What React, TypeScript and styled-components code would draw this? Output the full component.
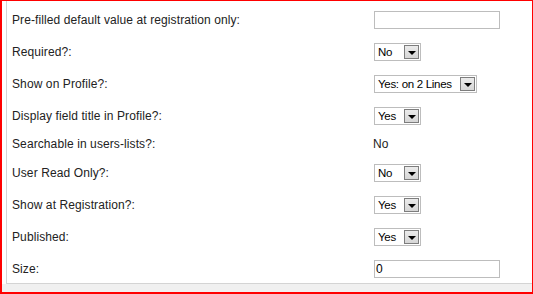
import React from "react";
import styled, { createGlobalStyle } from "styled-components";

const Global = createGlobalStyle`
  html, body { margin: 0; padding: 0; background: #ffffff; }
  body { font-family: "Liberation Sans", Arial, sans-serif; }
  * { box-sizing: border-box; }
`;

const Frame = styled.div`
  width: 533px;
  height: 294px;
  border-style: solid;
  border-color: #ff0000;
  border-width: 1px 1px 2px 2px;
  background: #f0f0f0;
  display: flex;
  flex-direction: column;
`;

const Sheet = styled.div`
  background: #ffffff;
  padding-left: 4px;
`;

const Panel = styled.div`
  border-left: 1px solid #d4d4d4;
  border-bottom: 1px solid #d4d4d4;
  height: 283px;
  padding: 3px 0 0 5px;
  display: grid;
  grid-template-columns: 361px 1fr;
  align-content: start;
`;

const Row = styled.div<{ $text?: boolean; $last?: boolean }>`
  display: contents;
  & > div {
    padding: ${(p) => (p.$text ? "5px 0" : p.$last ? "7px 0 5px" : "7px 0")};
    line-height: ${(p) => (p.$text ? "15px" : "18px")};
    height: ${(p) => (p.$text ? "25px" : p.$last ? "30px" : "32px")};
  }
`;

const Label = styled.div`
  font-size: 12px;
  color: #222222;
  white-space: nowrap;
  letter-spacing: 0.1px;
`;

const Value = styled.div`
  font-size: 12px;
  color: #222222;
  display: flex;
  align-items: flex-start;
`;

const TextBox = styled.div`
  width: 126px;
  height: 18px;
  margin-left: 1px;
  border: 1px solid #bdbdbd;
  background: #ffffff;
  font-size: 12px;
  line-height: 16px;
  padding-left: 1px;
  color: #000000;
`;

const Select = styled.div<{ $w: number }>`
  width: ${(p) => p.$w}px;
  height: 18px;
  margin-left: 1px;
  border: 1px solid #bdbdbd;
  background: #ffffff;
  display: flex;
  align-items: center;
  justify-content: space-between;
  padding: 0 1px 0 3px;
`;

const SelectText = styled.span`
  font-size: 11.5px;
  line-height: 16px;
  color: #000000;
  white-space: nowrap;
  letter-spacing: -0.3px;
`;

const Arrow = styled.span`
  width: 15px;
  height: 14px;
  border: 1px solid #7d7d7d;
  background: linear-gradient(#ebebeb, #d6d6d6);
  display: flex;
  align-items: center;
  justify-content: center;
  &::after {
    content: "";
    margin-top: 2px;
    border-left: 4px solid transparent;
    border-right: 4px solid transparent;
    border-top: 4px solid #000000;
  }
`;

type Field =
  | { label: string; kind: "input"; value: string }
  | { label: string; kind: "select"; value: string; width: number }
  | { label: string; kind: "text"; value: string };

const fields: Field[] = [
  { label: "Pre-filled default value at registration only:", kind: "input", value: "" },
  { label: "Required?:", kind: "select", value: "No", width: 47 },
  { label: "Show on Profile?:", kind: "select", value: "Yes: on 2 Lines", width: 103 },
  { label: "Display field title in Profile?:", kind: "select", value: "Yes", width: 47 },
  { label: "Searchable in users-lists?:", kind: "text", value: "No" },
  { label: "User Read Only?:", kind: "select", value: "No", width: 47 },
  { label: "Show at Registration?:", kind: "select", value: "Yes", width: 47 },
  { label: "Published:", kind: "select", value: "Yes", width: 47 },
  { label: "Size:", kind: "input", value: "0" },
];

export default function App() {
  return (
    <>
      <Global />
      <Frame>
        <Sheet>
          <Panel>
            {fields.map((f, i) => (
              <Row key={i} $text={f.kind === "text"} $last={i === fields.length - 1}>
                <Label>{f.label}</Label>
                <Value>
                  {f.kind === "input" && <TextBox>{f.value}</TextBox>}
                  {f.kind === "select" && (
                    <Select $w={f.width}>
                      <SelectText>{f.value}</SelectText>
                      <Arrow />
                    </Select>
                  )}
                  {f.kind === "text" && f.value}
                </Value>
              </Row>
            ))}
          </Panel>
        </Sheet>
      </Frame>
    </>
  );
}
